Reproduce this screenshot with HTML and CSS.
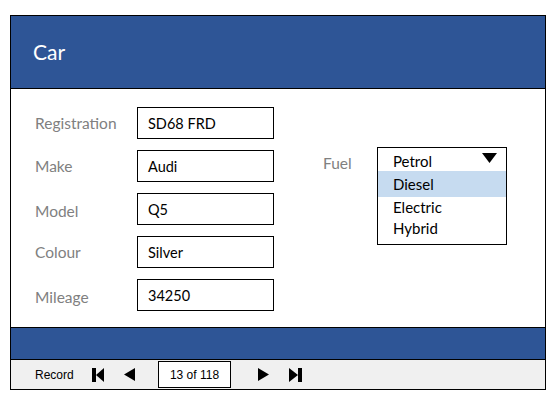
FILE: index.html
```html
<!DOCTYPE html>
<html>
<head>
<meta charset="utf-8">
<link rel="stylesheet" href="styles.css">
</head>
<body>
<div class="frame">
  <header class="title">Car</header>
  <main class="content">
    <div class="fields">
      <div class="label">Registration</div><div class="input">SD68 FRD</div>
      <div class="label">Make</div><div class="input">Audi</div>
      <div class="label lower">Model</div><div class="input">Q5</div>
      <div class="label">Colour</div><div class="input">Silver</div>
      <div class="label lower">Mileage</div><div class="input">34250</div>
    </div>
    <div class="fuel">
      <div class="label fuel-label">Fuel</div>
      <div class="combo">
        <div class="opt opt-first"><span>Petrol</span>
          <svg class="caret" width="15" height="10" viewBox="0 0 15 10"><polygon points="0,0 15,0 7.5,10" fill="#000"/></svg>
        </div>
        <div class="opt opt-sel">Diesel</div>
        <div class="opt opt-mid">Electric</div>
        <div class="opt">Hybrid</div>
      </div>
    </div>
  </main>
  <div class="band"></div>
  <nav class="nav">
    <span class="rec">Record</span>
    <svg class="nb nb-first" width="12" height="14" viewBox="0 0 12 14"><rect x="0" y="0" width="4" height="14" fill="#000"/><polygon points="4,7 12,0 12,14" fill="#000"/></svg>
    <svg class="nb nb-prev" width="11" height="13" viewBox="0 0 11 13"><polygon points="0,6.5 11,0 11,13" fill="#000"/></svg>
    <div class="pos">13 of 118</div>
    <svg class="nb nb-next" width="11" height="13" viewBox="0 0 11 13"><polygon points="11,6.5 0,0 0,13" fill="#000"/></svg>
    <svg class="nb nb-last" width="13" height="14" viewBox="0 0 13 14"><polygon points="9,7 0,0 0,14" fill="#000"/><rect x="9" y="0" width="4" height="14" fill="#000"/></svg>
  </nav>
</div>
</body>
</html>
```

FILE: styles.css
```css
* { box-sizing: border-box; }
html, body { margin: 0; padding: 0; background: #fff; }
body { font-family: Lato, "Open Sans", sans-serif; }

.frame {
  margin: 15px 0 0 10px;
  width: 536px;
  height: 375px;
  border: 1px solid #000;
  display: flex;
  flex-direction: column;
}

.title {
  height: 73px;
  background: #2e5596;
  border-bottom: 1px solid #000;
  color: #fff;
  font-size: 21px;
  padding: 24px 0 0 22px;
  line-height: 24px;
}

.content {
  height: 239px;
  border-bottom: 1px solid #000;
  display: flex;
  padding: 18px 0 0 24px;
}

.fields {
  display: grid;
  grid-template-columns: 102px 137px;
  grid-auto-rows: 32px;
  row-gap: 11px;
  align-items: center;
}

.label {
  color: #808080;
  font-size: 15.5px;
}
.label.lower { padding-top: 3px; }

.input {
  height: 32px;
  border: 1px solid #000;
  font-size: 14.5px;
  color: #000;
  padding-left: 10px;
  display: flex;
  align-items: center;
}

.fuel {
  display: flex;
  margin: 40px 0 0 49px;
  align-items: flex-start;
}
.fuel-label {
  width: 54px;
  padding-top: 7px;
}

.combo {
  width: 130px;
  height: 98px;
  border: 1px solid #000;
  font-size: 15px;
  color: #000;
}
.opt {
  height: 22px;
  line-height: 22px;
  padding-left: 15px;
}
.opt-first {
  height: 23px;
  display: flex;
  justify-content: space-between;
  padding-right: 9px;
  padding-top: 2px;
  line-height: 22px;
}
.caret { margin-top: 3px; }
.opt-sel {
  height: 26px;
  line-height: 26px;
  background: #c6dbf0;
}
.opt-mid { height: 20px; line-height: 20px; }

.band {
  height: 32px;
  background: #2e5596;
  border-bottom: 1px solid #000;
}

.nav {
  flex: 1;
  background: #f0f0f0;
  display: flex;
  align-items: center;
  padding-left: 24px;
  font-family: "Liberation Sans", Arial, sans-serif;
  font-size: 12px;
  color: #000;
}
.rec { width: 57px; }
.nb-prev { margin-left: 20px; }
.pos {
  margin-left: 23px;
  width: 73px;
  height: 27px;
  border: 1px solid #000;
  background: #fff;
  display: flex;
  align-items: center;
  justify-content: center;
}
.nb-next { margin-left: 27px; }
.nb-last { margin-left: 20px; }
```
